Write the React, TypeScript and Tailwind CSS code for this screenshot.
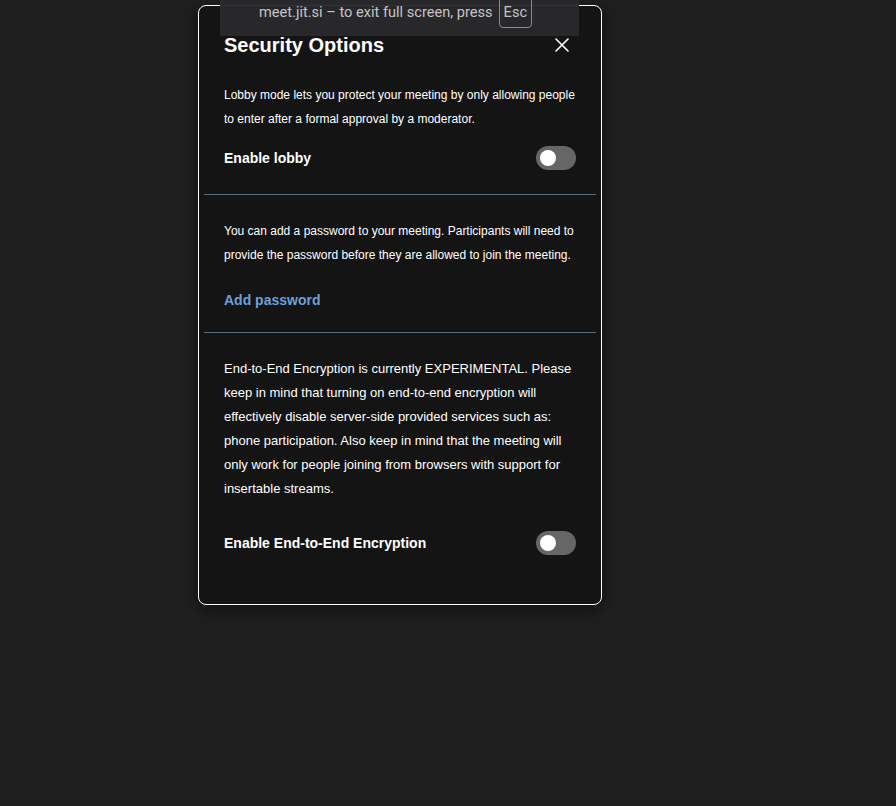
import React from "react";

function Toggle() {
  return (
    <div className="relative h-6 w-10 shrink-0 rounded-full bg-[#666666]">
      <span className="absolute left-1 top-1 h-4 w-4 rounded-full bg-white" />
    </div>
  );
}

export default function App() {
  return (
    <div
      className="relative h-[806px] w-full bg-[#1f1f1f] pl-[198px] pt-[5px] text-white"
      style={{ fontFamily: '"Liberation Sans", Arial, sans-serif' }}
    >
      {/* Dialog */}
      <div className="flex h-[600px] w-[404px] flex-col rounded-lg border border-white bg-[#141414] px-[5px] shadow-[0_4px_16px_rgba(0,0,0,0.5)]">
        <div className="flex h-[28px] items-center justify-between px-5 mt-[25px]">
          <h1 className="text-[20px] font-bold leading-7">Security Options</h1>
          <svg width="14" height="14" viewBox="0 0 14 14" className="mr-[7px]">
            <path d="M1 1 L13 13 M13 1 L1 13" stroke="white" strokeWidth="1.6" strokeLinecap="round" />
          </svg>
        </div>

        {/* Lobby */}
        <div className="border-b border-[#5f6b78] px-5 pb-6 pt-6">
          <p className="text-[12px] leading-6">
            Lobby mode lets you protect your meeting by only allowing people to enter after a formal approval by a
            moderator.
          </p>
          <div className="mt-[15px] flex h-6 items-center justify-between">
            <span className="text-[14px] font-bold">Enable lobby</span>
            <Toggle />
          </div>
        </div>

        {/* Password */}
        <div className="border-b border-[#5f6b78] px-5 pb-[22px] pt-6">
          <p className="text-[12px] leading-6">
            You can add a password to your meeting. Participants will need to provide the password before they are
            allowed to join the meeting.
          </p>
          <div className="mt-[23px] text-[14px] font-bold leading-5 text-[#6d9fd8]">Add password</div>
        </div>

        {/* E2EE */}
        <div className="px-5 pt-6">
          <p className="text-[13px] leading-6">
            End-to-End Encryption is currently EXPERIMENTAL. Please keep in mind that turning on end-to-end encryption
            will effectively disable server-side provided services such as: phone participation. Also keep in mind
            that the meeting will only work for people joining from browsers with support for insertable streams.
          </p>
          <div className="mt-[30px] flex h-6 items-center justify-between">
            <span className="text-[14px] font-bold">Enable End-to-End Encryption</span>
            <Toggle />
          </div>
        </div>
      </div>

      {/* Fullscreen bubble */}
      <div
        className="absolute left-[220px] top-0 flex h-9 w-[359px] items-start bg-[#29292c]/95 pl-[39px] text-[14.6px] text-[#c4c4c4]"
        style={{ fontFamily: 'Roboto, "Open Sans", sans-serif' }}
      >
        <span className="mt-[2px] leading-5">meet.jit.si – to exit full screen, press</span>
        <span className="ml-[6px] -mt-1 flex h-8 items-center rounded-sm border border-[#8a8a8a] px-[4px] leading-5">
          Esc
        </span>
      </div>
    </div>
  );
}
